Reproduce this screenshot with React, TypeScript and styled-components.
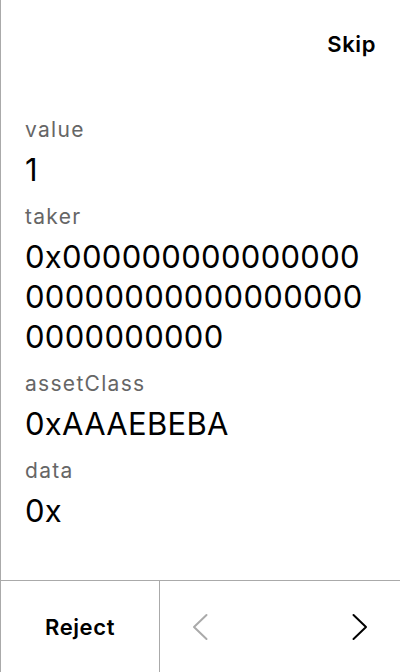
import React from "react";
import styled, { createGlobalStyle } from "styled-components";

const Global = createGlobalStyle`
  html, body { margin: 0; padding: 0; background: #fff; }
  body { font-family: Inter, "Noto Sans", sans-serif; color: #000; }
  * { box-sizing: border-box; }
`;

const Screen = styled.div`
  width: 400px;
  height: 672px;
  display: flex;
  flex-direction: column;
  border-left: 1px solid #aaaaaa;
  background: #fff;
`;

const Header = styled.div`
  height: 88px;
  flex: none;
  display: flex;
  align-items: center;
  justify-content: flex-end;
  padding: 0 24px;
`;

const TextButton = styled.button`
  border: none;
  background: none;
  padding: 0;
  font-family: Inter, sans-serif;
  font-size: 22px;
  line-height: 26px;
  font-weight: 600;
  letter-spacing: 0.6px;
  color: #000;
  cursor: pointer;
`;

const Content = styled.div`
  flex: 1;
  display: flex;
  flex-direction: column;
  gap: 13px;
  padding: 28px 30px 0 24px;
`;

const Field = styled.div`
  display: flex;
  flex-direction: column;
  gap: 6px;
`;

const Label = styled.div`
  font-size: 21px;
  line-height: 28px;
  letter-spacing: 1.3px;
  color: #666;
`;

const Value = styled.div`
  font-size: 31px;
  line-height: 40px;
  letter-spacing: 0.3px;
  color: #000;
  word-break: break-all;
`;

const Footer = styled.div`
  height: 92px;
  flex: none;
  display: flex;
  border-top: 1px solid #aaaaaa;
`;

const RejectCell = styled.div`
  width: 159px;
  flex: none;
  display: flex;
  align-items: center;
  justify-content: center;
  border-right: 1px solid #aaaaaa;
`;

const NavCell = styled.div`
  flex: 1;
  display: flex;
  align-items: center;
  justify-content: space-between;
  padding: 0 32px;
`;

const NavButton = styled.button<{ $disabled?: boolean }>`
  border: none;
  background: none;
  padding: 0;
  width: 16px;
  height: 28px;
  display: flex;
  align-items: center;
  justify-content: center;
  color: ${(p) => (p.$disabled ? "#aaaaaa" : "#000")};
  cursor: pointer;
`;

const Chevron = ({ dir }: { dir: "left" | "right" }) => (
  <svg width="16" height="28" viewBox="0 0 16 28" fill="none">
    <polyline
      points={dir === "left" ? "14.5,2 2,14 14.5,26" : "1.5,2 14,14 1.5,26"}
      stroke="currentColor"
      strokeWidth="2"
      strokeLinecap="round"
      strokeLinejoin="round"
    />
  </svg>
);

const fields = [
  { label: "value", value: "1" },
  { label: "taker", value: "0x" + "0".repeat(42) },
  { label: "assetClass", value: "0xAAAEBEBA" },
  { label: "data", value: "0x" },
];

export default function App() {
  return (
    <>
      <Global />
      <Screen>
        <Header>
          <TextButton>Skip</TextButton>
        </Header>
        <Content>
          {fields.map((f) => (
            <Field key={f.label}>
              <Label>{f.label}</Label>
              <Value>{f.value}</Value>
            </Field>
          ))}
        </Content>
        <Footer>
          <RejectCell>
            <TextButton>Reject</TextButton>
          </RejectCell>
          <NavCell>
            <NavButton $disabled>
              <Chevron dir="left" />
            </NavButton>
            <NavButton>
              <Chevron dir="right" />
            </NavButton>
          </NavCell>
        </Footer>
      </Screen>
    </>
  );
}
